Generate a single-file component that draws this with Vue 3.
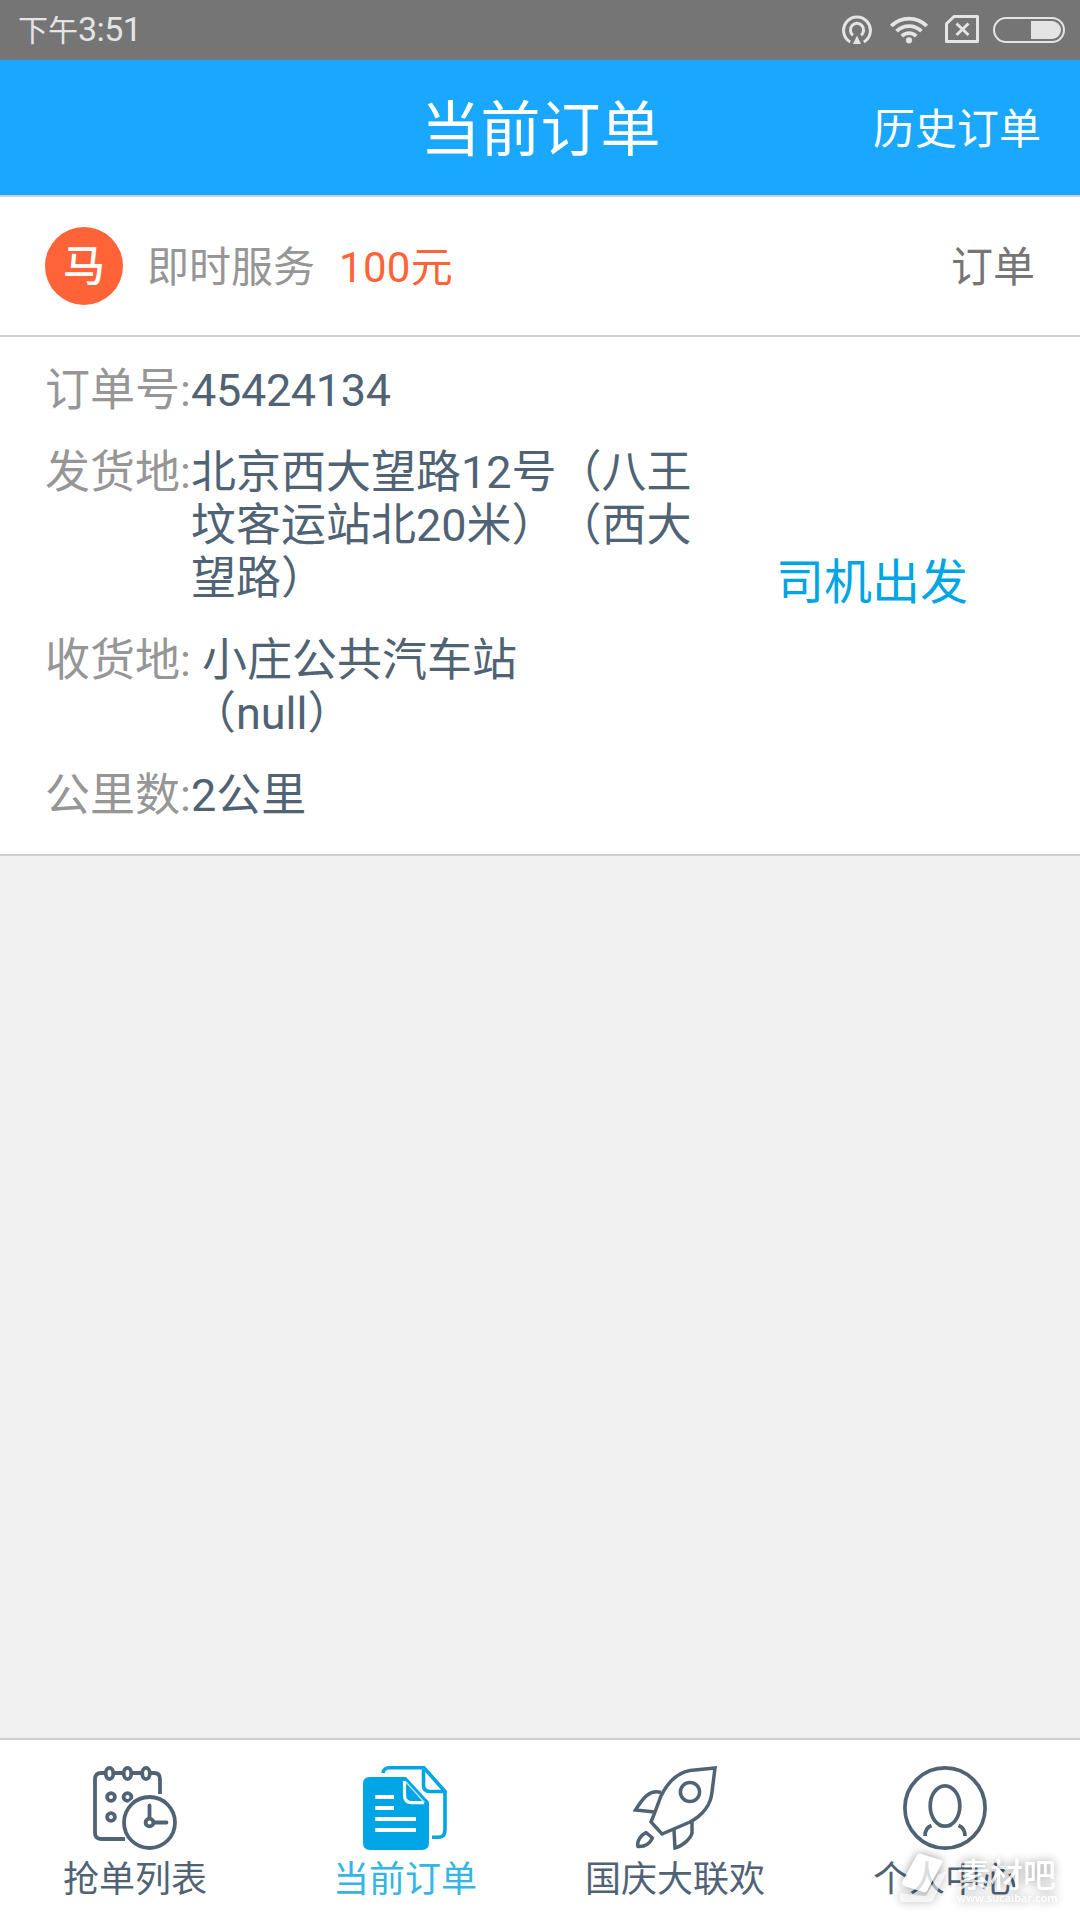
<script setup>
import { ref } from 'vue'

const order = {
  type: '即时服务',
  price: '100元',
  status: '订单',
  action: '司机出发',
}

const fields = [
  { label: '订单号:', value: '45424134', number: true },
  { label: '发货地:', value: '北京西大望路12号（八王坟客运站北20米）（西大望路）' },
  { label: '收货地:', value: ' 小庄公共汽车站\n（null）' },
  { label: '公里数:', value: '2公里' },
]

const tabs = [
  { id: 'list', name: '抢单列表' },
  { id: 'current', name: '当前订单' },
  { id: 'party', name: '国庆大联欢' },
  { id: 'mine', name: '个人中心' },
]

const active = ref('current')
</script>

<template>
  <div class="page">
    <div class="status-bar">
      <div class="time">下午<span class="clock">3:51</span></div>
      <div class="status-icons">
        <svg class="hotspot" width="30" height="30" viewBox="0 0 30 30" fill="none" stroke="#e4e4e4" stroke-width="3">
          <path d="M8.2 27A13.4 13.4 0 1 1 21.8 27" />
          <path d="M11 20.2A6.6 6.6 0 1 1 19 20.2" />
          <path d="M15 20.5L19 29H11Z" fill="#e4e4e4" stroke="none" />
        </svg>
        <svg class="wifi" width="38" height="28" viewBox="0 0 38 28" fill="none" stroke="#e4e4e4" stroke-width="3.8">
          <path d="M1.3 10A25 25 0 0 1 36.7 10" />
          <path d="M6.6 15.2A17.5 17.5 0 0 1 31.4 15.2" />
          <path d="M11.8 20.2A10.2 10.2 0 0 1 26.2 20.2" />
          <circle cx="19" cy="24.3" r="3.1" fill="#e4e4e4" stroke="none" />
        </svg>
        <svg class="sim" width="34" height="28" viewBox="0 0 34 28" fill="none" stroke="#e4e4e4" stroke-width="3">
          <path d="M9 1.5H32.5V26.5H1.5V8.8Z" stroke-linejoin="round" />
          <path d="M11.5 8.5L23.5 20M23.5 8.5L11.5 20" />
        </svg>
        <svg class="battery" width="72" height="26" viewBox="0 0 72 26">
          <rect x="1" y="1" width="70" height="24" rx="12" fill="none" stroke="#e4e4e4" stroke-width="2" />
          <path d="M38 4H59A9 9 0 0 1 59 22H38Z" fill="#e4e4e4" />
        </svg>
      </div>
    </div>

    <div class="header">
      <span></span>
      <span class="title">当前订单</span>
      <span class="history">历史订单</span>
    </div>

    <div class="order-head">
      <span class="badge">马</span>
      <span class="type">{{ order.type }}</span>
      <span class="price">{{ order.price }}</span>
      <span class="order-status">{{ order.status }}</span>
    </div>

    <div class="order-body">
      <div class="fields">
        <div class="field" v-for="item in fields" :key="item.label">
          <span class="label">{{ item.label }}</span>
          <span class="value" :class="{ number: item.number }">{{ item.value }}</span>
        </div>
      </div>
      <div class="action">{{ order.action }}</div>
    </div>

    <div class="empty"></div>

    <div class="tab-bar">
      <div class="tab" v-for="tab in tabs" :key="tab.id" :class="{ active: active === tab.id }" @click="active = tab.id">
        <svg v-if="tab.id === 'list'" width="84" height="84" viewBox="0 0 84 84" fill="none" stroke="#506375" stroke-width="3.8">
          <path d="M32 73H8Q2 73 2 67V13Q2 7 8 7H61Q67 7 67 13V28" />
          <g fill="#fff">
            <ellipse cx="16.5" cy="7.5" rx="3.8" ry="5.6" />
            <ellipse cx="34.5" cy="7.5" rx="3.8" ry="5.6" />
            <ellipse cx="53" cy="7.5" rx="3.8" ry="5.6" />
          </g>
          <circle cx="18" cy="31" r="3.9" />
          <circle cx="34.5" cy="31" r="3.9" />
          <circle cx="18" cy="51" r="3.9" />
          <circle cx="56.5" cy="56.5" r="29" fill="#fff" stroke="none" />
          <circle cx="56.5" cy="56.5" r="25.5" />
          <circle cx="56.5" cy="56.5" r="3.9" />
          <path d="M56.5 52V39.5M61 56.5H73.5" stroke-linecap="round" />
        </svg>
        <svg v-else-if="tab.id === 'current'" width="84" height="84" viewBox="0 0 84 84" fill="none">
          <g stroke="#00a5e5" stroke-width="3.6">
            <path d="M20 7Q21 1.8 26 1.8H61L82 25.5V64Q82 71.3 75 71.3H69" />
            <path d="M60.5 2V19Q60.5 25.5 67 25.5H82" />
          </g>
          <path d="M7 11H43L66 36V77Q66 84 59 84H7Q0 84 0 77V18Q0 11 7 11Z" fill="#00a5e5" />
          <path d="M41.5 15V29Q41.5 36.7 49 36.7H61" stroke="#fff" stroke-width="3.2" />
          <path d="M43 16L61.5 36.5" stroke="#b8e6f8" stroke-width="1.4" />
          <path d="M12.3 31H31M12.3 42H31M12.3 53H53M12.3 64H53" stroke="#fff" stroke-width="3.8" />
        </svg>
        <svg v-else-if="tab.id === 'party'" width="84" height="84" viewBox="0 0 84 84" fill="none" stroke="#506375" stroke-width="3.5">
          <path d="M82 2L57 4.5C42 7 33 20 28 30L22 46L18 56L29 68L57 56C70 49 78 38 79 26Z" />
          <circle cx="57" cy="26" r="9.6" />
          <path d="M28 26.5C17 23 10 32 2.5 44L22 46" />
          <path d="M41 64L42 82C50 80 58 72 59 67V55" />
          <path d="M13 66.5L19.5 72C17 77 12 81 5 80.5C3.5 75 8 69 13 66.5Z" stroke-linejoin="round" />
        </svg>
        <svg v-else width="84" height="84" viewBox="0 0 84 84" fill="none" stroke="#506375" stroke-width="3.7">
          <circle cx="42" cy="42" r="40.1" />
          <ellipse cx="42" cy="40" rx="14.8" ry="20.2" />
          <path d="M28.5 59.5Q22 62 22 70M55.5 59.5Q62 62 62 70" />
        </svg>
        <span class="tab-name">{{ tab.name }}</span>
      </div>
    </div>

    <div class="watermark">
      <svg width="50" height="50" viewBox="0 0 50 50" fill="#fff">
        <path d="M17 2Q18 0 20 0.5L41 7Q43 8 42 10L27 38Q26 40 23 39L4 33Q1 32 2 29Z" />
        <path d="M0 40L12 42L26 43L38 22L47 18L33 47Q32 49 29 49H3Q0 49 0 46Z" opacity="0.7" />
      </svg>
      <div class="mark-text">
        <span class="mark-name">素材吧</span>
        <span class="mark-url">www.sucaibar.com</span>
      </div>
    </div>
  </div>
</template>

<style>
body {
  margin: 0;
  background-color: #f0f0f0;
}
</style>

<style scoped>
.page {
  position: relative;
  display: flex;
  flex-direction: column;
  width: 1080px;
  height: 1920px;
  overflow: hidden;
  background-color: #f0f0f0;
  font-family: Roboto, "Noto Sans CJK SC", sans-serif;
  text-spacing-trim: space-all;
}

.status-bar {
  display: flex;
  justify-content: space-between;
  box-sizing: border-box;
  height: 60px;
  padding: 0 15px 0 18px;
  background-color: #757575;
  color: #e4e4e4;
}

.time {
  font-size: 30px;
  line-height: 59px;
}

.clock {
  font-size: 34px;
  letter-spacing: -0.6px;
}

.status-icons {
  display: flex;
  align-items: flex-start;
  padding-top: 15px;
}

.wifi {
  margin: 1px 17px 0 18px;
}

.battery {
  margin: 2px 0 0 14px;
}

.header {
  display: grid;
  grid-template-columns: 1fr auto 1fr;
  align-items: center;
  box-sizing: border-box;
  height: 137px;
  padding: 0 39px 5px 40px;
  background-color: #1aa7ff;
  border-bottom: 2px solid #cfcfcf;
  color: #fff;
}

.title {
  padding-bottom: 2px;
  font-size: 60px;
}

.history {
  font-size: 42px;
  text-align: right;
}

.order-head {
  display: flex;
  align-items: center;
  height: 138px;
  padding: 0 45px;
  background-color: #fff;
  border-bottom: 2px solid #cfcfcf;
  font-size: 42px;
}

.badge {
  box-sizing: border-box;
  width: 78px;
  height: 78px;
  padding-top: 1px;
  border-radius: 50%;
  background-color: #ff6337;
  color: #fff;
  font-weight: 500;
  line-height: 78px;
  text-align: center;
}

.type,
.price,
.order-status {
  padding-bottom: 5px;
}

.type {
  margin-left: 24px;
  color: #969696;
}

.price {
  margin-left: 24px;
  letter-spacing: 0.3px;
  color: #ff6337;
}

.order-status {
  margin-left: auto;
  color: #757575;
}

.order-body {
  display: flex;
  height: 517px;
  background-color: #fff;
  border-bottom: 2px solid #cfcfcf;
}

.fields {
  display: flex;
  flex-direction: column;
  gap: 29px;
  width: 692px;
  box-sizing: border-box;
  padding: 27px 0 0 45px;
  font-size: 45px;
  line-height: 53px;
}

.field {
  display: flex;
}

.label {
  flex: none;
  color: #969696;
}

.value {
  flex: none;
  width: 510px;
  color: #506375;
  white-space: pre-wrap;
}

.value.number {
  letter-spacing: -0.3px;
}

.action {
  padding: 211px 0 0 84px;
  color: #00a5e5;
  font-size: 48px;
  line-height: 70px;
}

.empty {
  flex: 1;
}

.tab-bar {
  display: grid;
  grid-template-columns: repeat(4, 1fr);
  height: 180px;
  background-color: #fff;
  border-top: 2px solid #cfcfcf;
}

.tab {
  display: flex;
  flex-direction: column;
  align-items: center;
  padding-top: 26px;
  color: #506375;
}

.tab-name {
  margin-top: 8px;
  font-size: 36px;
  line-height: 44px;
}

.tab.active .tab-name {
  color: #33b5e5;
}

/* sits on top of the last tab */
.watermark {
  position: absolute;
  left: 900px;
  bottom: 17px;
  display: flex;
  gap: 7px;
  color: #fff;
  opacity: 0.78;
  pointer-events: none;
  filter: drop-shadow(0 0 5px rgba(0, 0, 0, 0.5));
}

.mark-text {
  display: flex;
  flex-direction: column;
  padding-top: 6px;
}

.mark-name {
  font-size: 33px;
  font-weight: 500;
  line-height: 33px;
}

.mark-url {
  font-family: "Open Sans", sans-serif;
  font-size: 11px;
  font-weight: 600;
  line-height: 11px;
}
</style>
